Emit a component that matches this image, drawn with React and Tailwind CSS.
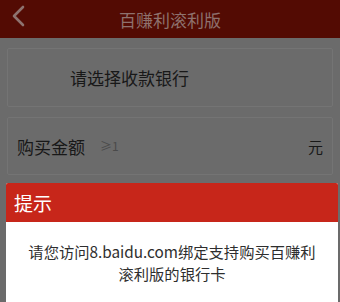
export default function App() {
  const font = { fontFamily: '"Noto Sans CJK SC", "Noto Sans", sans-serif' };
  return (
    <div className="relative w-[340px] h-[302px] overflow-hidden bg-[#6b6b6b]" style={font}>
      <div className="relative h-[38px] bg-[#530b03] flex items-center justify-center">
        <svg className="absolute left-[10px] top-[4px]" width="18" height="26" viewBox="0 0 18 26">
          <path d="M13 3 L4 12 L13 21" fill="none" stroke="#8d736f" strokeWidth="2.6" strokeLinecap="round" strokeLinejoin="round" />
        </svg>
        <span className="text-[17px] text-[#8e716d] leading-none">百赚利滚利版</span>
      </div>
      <div className="px-[7px] pt-[10px] flex flex-col gap-[10px]">
        <div className="h-[59px] border border-[#747474] rounded-[2px] flex items-center pl-[62px]">
          <span className="text-[17px] text-[#181818] leading-none">请选择收款银行</span>
        </div>
        <div className="h-[58px] border border-[#747474] rounded-[2px] flex items-center pl-[9px] pr-[9px]">
          <span className="text-[17px] text-[#181818] leading-none">购买金额</span>
          <span className="ml-[15px] text-[12px] text-[#4a4a4a] leading-none">≥1</span>
          <span className="ml-auto text-[15px] text-[#181818] leading-none">元</span>
        </div>
      </div>
      <div className="absolute left-[6px] right-[2px] top-[183px] bottom-0 bg-white rounded-t-[2px] overflow-hidden">
        <div className="h-[39px] bg-[#c7261a] flex items-center pl-[8px]">
          <span className="text-[19px] text-white leading-none">提示</span>
        </div>
        <div className="pt-[18px] px-[10px] text-center text-[15.3px] leading-[22px] text-[#2e2e2e]">
          请您访问8.baidu.com绑定支持购买百赚利<br />滚利版的银行卡
        </div>
      </div>
    </div>
  );
}
